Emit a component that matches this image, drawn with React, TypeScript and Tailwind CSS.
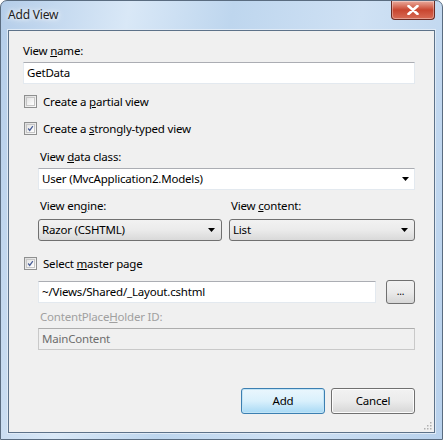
const font = { fontFamily: '"Noto Sans", "Open Sans", sans-serif' };

function Check({ checked, children }: { checked?: boolean; children: React.ReactNode }) {
  return (
    <div className="flex h-[13px] items-center">
      <div className="flex h-[13px] w-[13px] items-center justify-center border border-[#8e8f8f] bg-gradient-to-br from-[#dcdcdc] to-[#fbfbfb]">
        <div className="flex h-[9px] w-[9px] items-center justify-center border border-[#c6c6c6] bg-gradient-to-br from-[#e4e4e4] to-white">
          {checked && (
            <svg width="9" height="9" viewBox="0 0 9 9">
              <path d="M1.5 4.5 L3.5 7 L7.5 1.5" fill="none" stroke="#4a5f97" strokeWidth="1.6" />
            </svg>
          )}
        </div>
      </div>
      <span className="ml-[6px] leading-none">{children}</span>
    </div>
  );
}

function Arrow() {
  return (
    <svg width="7" height="4" viewBox="0 0 7 4" className="mr-[3px]">
      <path d="M0 0 H7 L3.5 4 Z" fill="#000" />
    </svg>
  );
}

function TextBox({ value, disabled, className }: { value: string; disabled?: boolean; className?: string }) {
  return (
    <div
      className={`flex h-[22px] items-center border px-[3px] ${
        disabled
          ? 'border-[#c9c9c9] border-t-[#adadad] bg-[#f0f0f0] text-[#6d6d6d]'
          : 'border-[#e3e9ef] border-t-[#abadb3] bg-white text-black'
      } ${className ?? ''}`}
    >
      {value}
    </div>
  );
}

function DropList({ value, className }: { value: string; className?: string }) {
  return (
    <div
      className={`flex h-[22px] items-center justify-between rounded-[3px] border border-[#707070] bg-gradient-to-b from-[#f2f2f2] via-[#ebebeb] to-[#d9d9d9] px-[3px] ${className ?? ''}`}
    >
      <span>{value}</span>
      <Arrow />
    </div>
  );
}

export default function App() {
  return (
    <div
      style={font}
      className="relative h-[440px] w-[443px] overflow-hidden rounded-t-[7px] border border-[#5a6c80] bg-[linear-gradient(100deg,#b4cde9_0%,#d9e8f7_25%,#bed6ee_45%,#cfe1f4_70%,#b8d1ec_100%)] text-[11.5px] tracking-[-0.2px] text-black"
    >
      <div className="flex h-[29px] items-start justify-between pl-[7px]">
        <span className="mt-[5px] text-[12px] text-[#1e1e1e] [text-shadow:0_0_8px_#fff,0_0_4px_#fff]">Add View</span>
        <div className="mr-[7px] flex h-[19px] w-[44px] items-center justify-center rounded-b-[4px] border border-t-0 border-[#6b2a22] bg-gradient-to-b from-[#e9a99c] via-[#c8452f] to-[#d86b55] shadow-[inset_0_0_0_1px_rgba(255,255,255,0.35)]">
          <svg width="12" height="10" viewBox="0 0 12 10">
            <path d="M1.5 1 L10.5 9 M10.5 1 L1.5 9" stroke="#fff" strokeWidth="2.6" strokeLinecap="round" />
          </svg>
        </div>
      </div>

      <div className="relative mx-[7px] h-[403px] border border-[#5d7289] bg-[#f0f0f0] pl-[14px] pr-[19px] shadow-[0_0_0_1px_#dfeaf6]">
        <div className="pt-[13px] leading-[14px]">
          View <span className="underline">n</span>ame:
        </div>
        <TextBox value="GetData" className="mt-[4px]" />

        <div className="mt-[11px] pl-[1px]">
          <Check>
            Create a <span className="underline">p</span>artial view
          </Check>
        </div>
        <div className="mt-[14px] pl-[1px]">
          <Check checked>
            Create a <span className="underline">s</span>trongly-typed view
          </Check>
        </div>

        <div className="pl-[15px]">
          <div className="mt-[15px] pl-[2px] leading-[14px]">
            View <span className="underline">d</span>ata class:
          </div>
          <div className="mt-[4px] flex h-[22px] items-center justify-between border border-[#e3e9ef] border-t-[#abadb3] bg-white pl-[3px] pr-[2px]">
            <span>User (MvcApplication2.Models)</span>
            <Arrow />
          </div>

          <div className="mt-[9px] flex gap-[7px]">
            <div className="w-[184px]">
              <div className="pl-[2px] leading-[14px]">
                View en<span className="underline">g</span>ine:
              </div>
              <DropList value="Razor (CSHTML)" className="mt-[6px]" />
            </div>
            <div className="flex-1">
              <div className="pl-[2px] leading-[14px]">
                View <span className="underline">c</span>ontent:
              </div>
              <DropList value="List" className="mt-[6px]" />
            </div>
          </div>
        </div>

        <div className="mt-[16px] pl-[1px]">
          <Check checked>
            Select <span className="underline">m</span>aster page
          </Check>
        </div>

        <div className="pl-[15px]">
          <div className="mt-[10px] flex items-center gap-[10px]">
            <TextBox value="~/Views/Shared/_Layout.cshtml" className="flex-1" />
            <div className="flex h-[24px] w-[29px] items-center justify-center rounded-[3px] border border-[#707070] bg-gradient-to-b from-[#f2f2f2] via-[#ebebeb] to-[#d6d6d6] pb-[3px] text-[10px] leading-none">
              ...
            </div>
          </div>
          <div className="mt-[6px] pl-[2px] leading-[14px] text-[#a0a0a0]">
            ContentPlace<span className="underline">H</span>older ID:
          </div>
          <TextBox value="MainContent" disabled className="mt-[4px]" />
        </div>

        <div className="absolute bottom-[18px] right-[19px] flex gap-[6px]">
          <div className="flex h-[26px] w-[84px] items-center justify-center rounded-[3px] border border-[#3c7fb1] bg-gradient-to-b from-[#eaf6fd] via-[#d9f0fc] to-[#a7d9f5] shadow-[inset_0_0_0_1px_#c2e4f6]">
            Add
          </div>
          <div className="flex h-[26px] w-[84px] items-center justify-center rounded-[3px] border border-[#707070] bg-gradient-to-b from-[#f2f2f2] via-[#ebebeb] to-[#d6d6d6] shadow-[inset_0_0_0_1px_#fcfcfc]">
            Cancel
          </div>
        </div>

        <svg width="10" height="10" viewBox="0 0 10 10" className="absolute bottom-[2px] right-[2px]">
          {[
            [8, 2],
            [8, 5],
            [5, 5],
            [8, 8],
            [5, 8],
            [2, 8],
          ].map(([x, y]) => (
            <rect key={`${x}-${y}`} x={x} y={y} width="1.5" height="1.5" fill="#b0b0b0" />
          ))}
        </svg>
      </div>
    </div>
  );
}
